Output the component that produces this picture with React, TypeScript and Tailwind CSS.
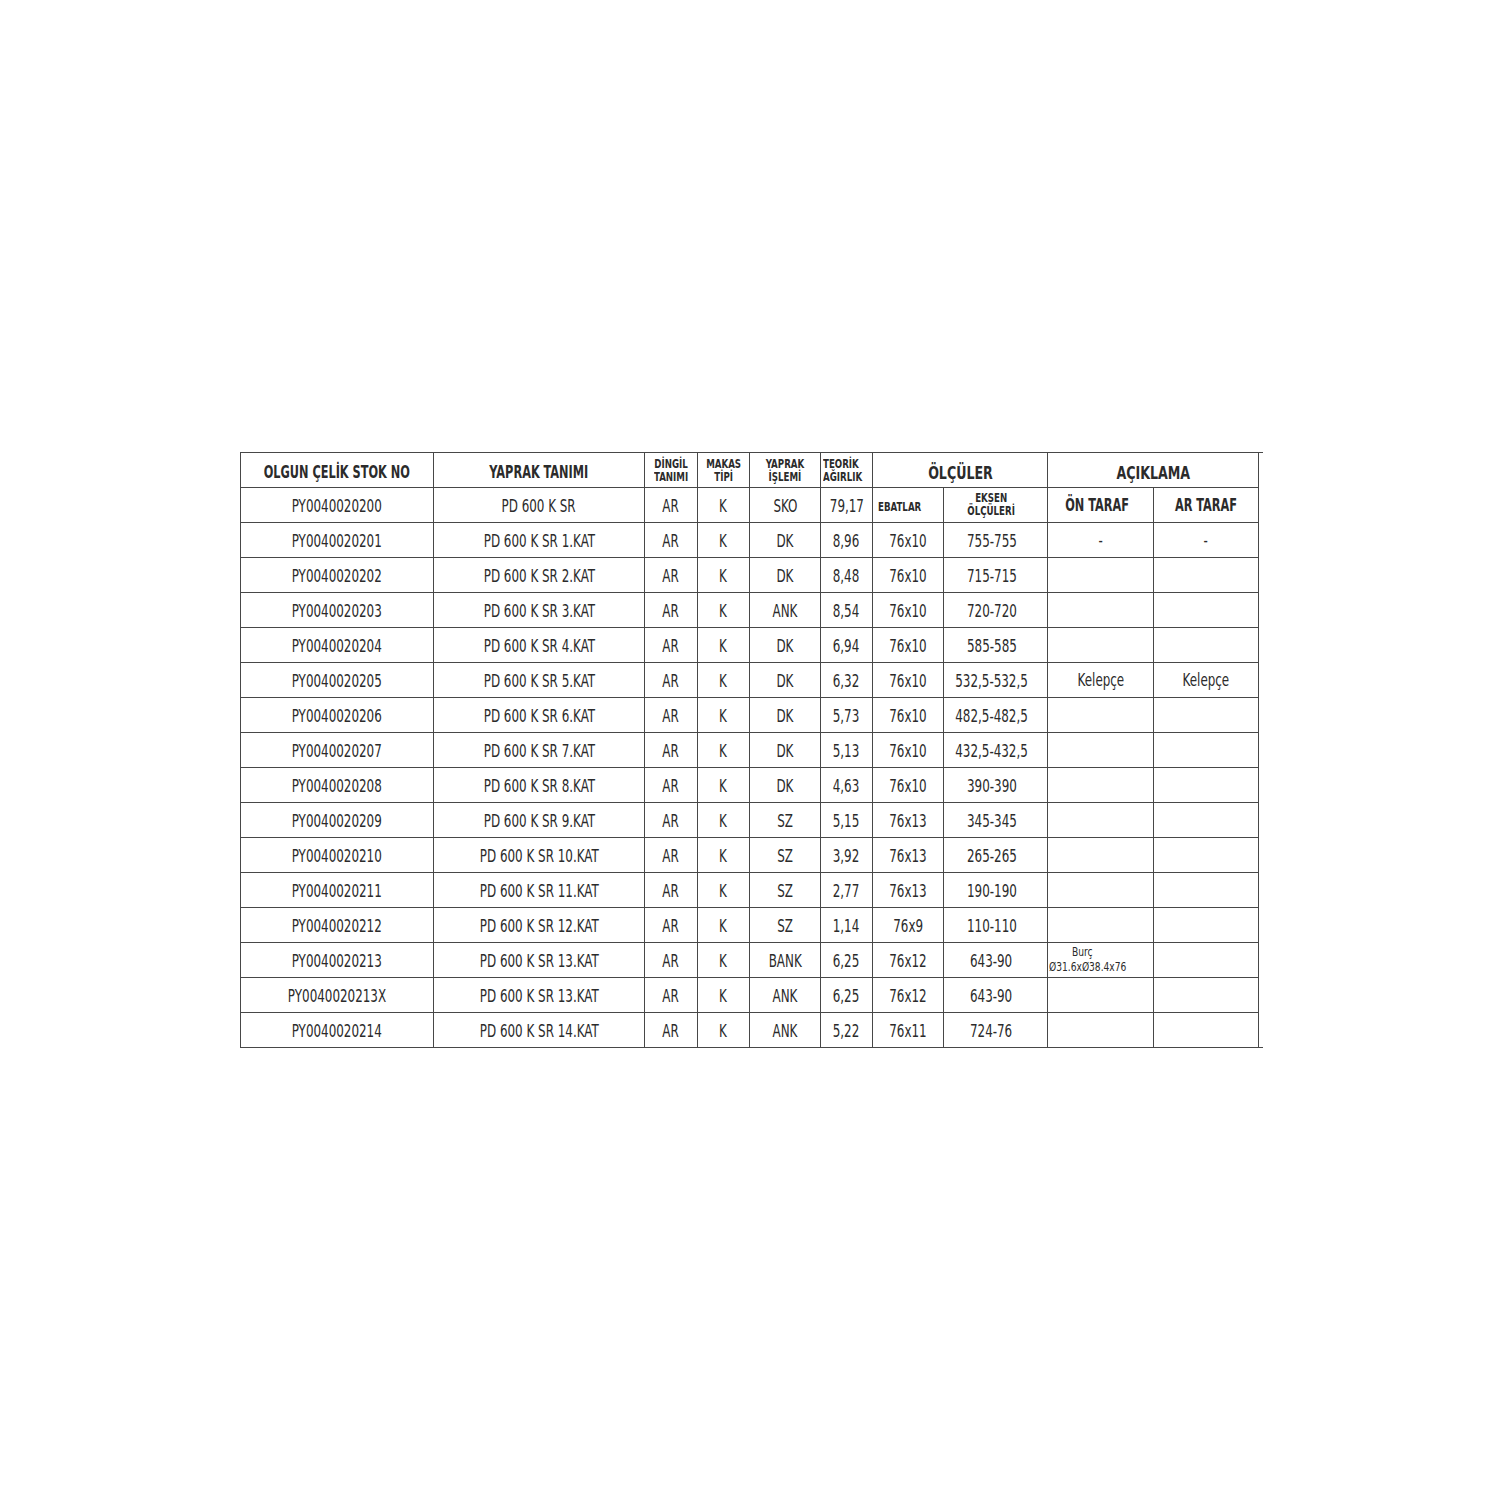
const rows = [
  ["PY0040020201", "PD 600 K SR 1.KAT", "AR", "K", "DK", "8,96", "76x10", "755-755", "-", "-"],
  ["PY0040020202", "PD 600 K SR 2.KAT", "AR", "K", "DK", "8,48", "76x10", "715-715", "", ""],
  ["PY0040020203", "PD 600 K SR 3.KAT", "AR", "K", "ANK", "8,54", "76x10", "720-720", "", ""],
  ["PY0040020204", "PD 600 K SR 4.KAT", "AR", "K", "DK", "6,94", "76x10", "585-585", "", ""],
  ["PY0040020205", "PD 600 K SR 5.KAT", "AR", "K", "DK", "6,32", "76x10", "532,5-532,5", "Kelepçe", "Kelepçe"],
  ["PY0040020206", "PD 600 K SR 6.KAT", "AR", "K", "DK", "5,73", "76x10", "482,5-482,5", "", ""],
  ["PY0040020207", "PD 600 K SR 7.KAT", "AR", "K", "DK", "5,13", "76x10", "432,5-432,5", "", ""],
  ["PY0040020208", "PD 600 K SR 8.KAT", "AR", "K", "DK", "4,63", "76x10", "390-390", "", ""],
  ["PY0040020209", "PD 600 K SR 9.KAT", "AR", "K", "SZ", "5,15", "76x13", "345-345", "", ""],
  ["PY0040020210", "PD 600 K SR 10.KAT", "AR", "K", "SZ", "3,92", "76x13", "265-265", "", ""],
  ["PY0040020211", "PD 600 K SR 11.KAT", "AR", "K", "SZ", "2,77", "76x13", "190-190", "", ""],
  ["PY0040020212", "PD 600 K SR 12.KAT", "AR", "K", "SZ", "1,14", "76x9", "110-110", "", ""],
  ["PY0040020213", "PD 600 K SR 13.KAT", "AR", "K", "BANK", "6,25", "76x12", "643-90", "BURC", ""],
  ["PY0040020213X", "PD 600 K SR 13.KAT", "AR", "K", "ANK", "6,25", "76x12", "643-90", "", ""],
  ["PY0040020214", "PD 600 K SR 14.KAT", "AR", "K", "ANK", "5,22", "76x11", "724-76", "", ""],
];

const cell = "border-[1.5px] border-[#474747] p-0 text-center align-middle overflow-visible";
const small = "text-[13px] leading-[13px] font-bold";

// condensed look: DejaVu Sans Condensed squeezed a little more
function N({
  children,
  left = false,
  tight = false,
}: {
  children: React.ReactNode;
  left?: boolean;
  tight?: boolean;
}) {
  return (
    <div className={`flex ${left ? "justify-start" : "justify-center"}`}>
      <span
        className={`shrink-0 whitespace-nowrap ${tight ? "scale-x-[0.74]" : "scale-x-[0.78]"} ${
          left ? "origin-left text-left" : "origin-center"
        }`}
      >
        {children}
      </span>
    </div>
  );
}

export default function App() {
  return (
    <div
      className="min-h-[1500px] w-[1500px] bg-white pl-[240px] pt-[452px] text-[#2b2b2b] text-[17px]"
      style={{ fontFamily: '"Liberation Sans Narrow", "DejaVu Sans Condensed", "Liberation Sans", sans-serif' }}
    >
      <table className="w-[1022px] table-fixed border-collapse">
        <colgroup>
          <col className="w-[193px]" />
          <col className="w-[211px]" />
          <col className="w-[53px]" />
          <col className="w-[52px]" />
          <col className="w-[71px]" />
          <col className="w-[52px]" />
          <col className="w-[71px]" />
          <col className="w-[104px]" />
          <col className="w-[106px]" />
          <col className="w-[105px]" />
          <col className="w-[4px]" />
        </colgroup>
        <tbody>
          <tr className="h-[35px]">
            <td className={`${cell} font-bold pt-[5px]`}><N tight>OLGUN ÇELİK STOK NO</N></td>
            <td className={`${cell} font-bold pt-[5px]`}><N tight>YAPRAK TANIMI</N></td>
            <td className={`${cell} ${small} pb-[1px]`}><N tight>DİNGİL<br />TANIMI</N></td>
            <td className={`${cell} ${small} pb-[1px]`}><N tight>MAKAS<br />TİPİ</N></td>
            <td className={`${cell} ${small} pb-[1px]`}><N tight>YAPRAK<br />İŞLEMİ</N></td>
            <td className={`${cell} ${small} pb-[1px] pl-[2px]`}><N left tight>TEORİK<br />AĞIRLIK</N></td>
            <td colSpan={2} className={`${cell} font-bold text-[18px] pt-[5px]`}><N>ÖLÇÜLER</N></td>
            <td colSpan={2} className={`${cell} font-bold text-[18px] pt-[5px]`}><N>AÇIKLAMA</N></td>
            <td className="border-t-[1.5px] border-[#474747] p-0" />
          </tr>
          <tr className="h-[35px]">
            <td className={`${cell} pt-[4px]`}><N>PY0040020200</N></td>
            <td className={`${cell} pt-[4px]`}><N>PD 600 K SR</N></td>
            <td className={`${cell} pt-[4px]`}><N>AR</N></td>
            <td className={`${cell} pt-[4px]`}><N>K</N></td>
            <td className={`${cell} pt-[4px]`}><N>SKO</N></td>
            <td className={`${cell} pt-[4px]`}><N>79,17</N></td>
            <td className={`${cell} ${small} pl-[5px] pt-[3px]`}><N left tight>EBATLAR</N></td>
            <td className={`${cell} ${small} pb-[3px] pr-[8px]`}><N tight>EKSEN<br />ÖLÇÜLERİ</N></td>
            <td className={`${cell} font-bold pt-[1px] pr-[6px]`}><N tight>ÖN TARAF</N></td>
            <td className={`${cell} font-bold pt-[1px]`}><N tight>AR TARAF</N></td>
            <td className="p-0" />
          </tr>
          {rows.map((r, i) => (
            <tr key={i} className="h-[35px]">
              {r.map((v, j) =>
                v === "BURC" ? (
                  <td key={j} className={`${cell} align-top pl-[1px] pt-[1px] text-[13px] leading-[15px]`}>
                    <div className="pl-[23px]"><N left>Burç</N></div>
                    <N left>Ø31.6xØ38.4x76</N>
                  </td>
                ) : (
                  <td key={j} className={`${cell} ${j >= 8 ? "pt-[1px]" : "pt-[4px]"} ${j === 7 ? "pr-[8px]" : ""}`}>
                    <N>{v}</N>
                  </td>
                )
              )}
              <td className={i === rows.length - 1 ? "border-b-[1.5px] border-[#474747] p-0" : "p-0"} />
            </tr>
          ))}
        </tbody>
      </table>
    </div>
  );
}
